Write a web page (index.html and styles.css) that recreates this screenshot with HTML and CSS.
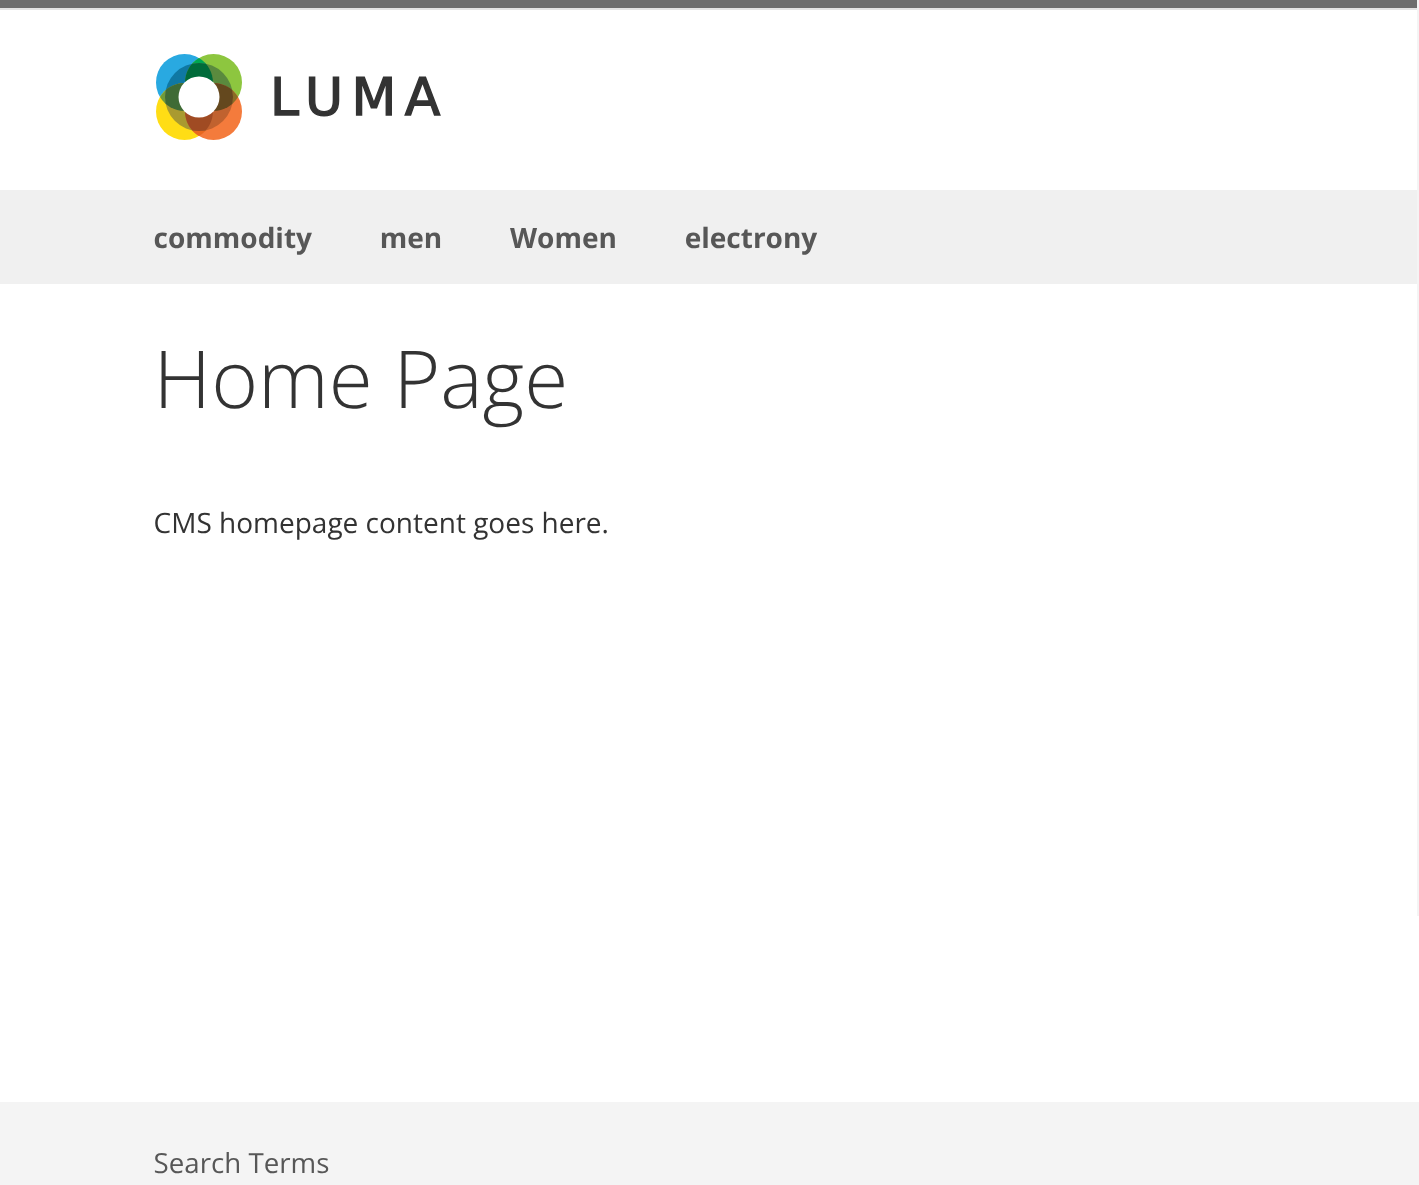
FILE: index.html
```html
<!DOCTYPE html>
<html lang="en">
<head>
    <meta charset="UTF-8">
    <title>Home Page</title>
    <link rel="stylesheet" href="styles.css">
</head>
<body>
    <div class="panel"></div>

    <header class="header">
        <a class="logo" href="#">
            <svg class="logo-mark" width="86" height="86" viewBox="0 0 86 86">
                <defs>
                    <clipPath id="inner">
                        <circle cx="43" cy="43" r="34"/>
                    </clipPath>
                    <path id="lens-top" d="M43 4A28.5 28.5 0 0 1 43 53A28.5 28.5 0 0 1 43 4Z"/>
                    <path id="lens-bottom" d="M43 33A28.5 28.5 0 0 1 43 82A28.5 28.5 0 0 1 43 33Z"/>
                    <path id="lens-left" d="M4 43A28.5 28.5 0 0 1 53 43A28.5 28.5 0 0 1 4 43Z"/>
                    <path id="lens-right" d="M33 43A28.5 28.5 0 0 1 82 43A28.5 28.5 0 0 1 33 43Z"/>
                </defs>
                <g class="petals">
                    <circle class="petal" cx="28.5" cy="28.5" r="28.5" fill="#29a9e1"/>
                    <circle cx="57.5" cy="28.5" r="28.5" fill="#8dc63f"/>
                    <circle cx="28.5" cy="57.5" r="28.5" fill="#ffdd15"/>
                    <circle cx="57.5" cy="57.5" r="28.5" fill="#f47b3c"/>
                    <use href="#lens-top" fill="#00a651"/>
                    <use href="#lens-left" fill="#6f9a3a"/>
                    <use href="#lens-right" fill="#8a6d25"/>
                    <use href="#lens-bottom" fill="#e8681f"/>
                </g>
                <g clip-path="url(#inner)">
                    <circle cx="28.5" cy="28.5" r="28.5" fill="#0f78a3"/>
                    <circle cx="57.5" cy="28.5" r="28.5" fill="#5a8a3e"/>
                    <circle cx="28.5" cy="57.5" r="28.5" fill="#a99a30"/>
                    <circle cx="57.5" cy="57.5" r="28.5" fill="#c0622f"/>
                    <use href="#lens-top" fill="#006b3a"/>
                    <use href="#lens-left" fill="#3f6b35"/>
                    <use href="#lens-right" fill="#64481e"/>
                    <use href="#lens-bottom" fill="#a04b23"/>
                </g>
                <circle cx="43" cy="43" r="20.5" fill="#fff"/>
            </svg>
            <span class="logo-text">LUMA</span>
        </a>
    </header>

    <nav class="nav">
        <a href="#">commodity</a>
        <a href="#">men</a>
        <a href="#">Women</a>
        <a href="#">electrony</a>
    </nav>

    <main class="main">
        <h1 class="title">Home Page</h1>
        <p class="content">CMS homepage content goes here.</p>
    </main>

    <footer class="footer">
        <a href="#">Search Terms</a>
    </footer>

    <div class="scrollbar"></div>
</body>
</html>
```

FILE: styles.css
```css
html, body {
    height: 1185px;
    overflow: hidden;
}

body {
    margin: 0;
    position: relative;
    background: #fff;
    color: #333;
    font-family: "Open Sans", sans-serif;
    font-size: 28px;
    line-height: 1.4;
    text-rendering: geometricPrecision;
}

a {
    color: inherit;
    text-decoration: none;
}

.panel {
    height: 8px;
    background: #6e6e6e;
    border-bottom: 2px solid #e4e4e4;
}

.header {
    height: 180px;
    padding-left: 156px;
    display: flex;
    align-items: center;
}

.logo {
    display: flex;
    align-items: center;
    gap: 28px;
    margin-top: -6px;
}

.petals {
    isolation: isolate;
}

.petal {
    mix-blend-mode: multiply;
}

.logo-text {
    padding-top: 2px;
    font-family: "DejaVu Sans", sans-serif;
    font-size: 52px;
    font-weight: 400;
    letter-spacing: 8.5px;
    line-height: 1;
    -webkit-text-stroke: 1.4px #333;
}

.nav {
    height: 91px;
    padding: 3px 0 0 153.6px;
    display: flex;
    align-items: center;
    gap: 67.8px;
    background: #f0f0f0;
    color: #575757;
    font-weight: 700;
}

.main {
    height: 818px;
    padding-left: 153.6px;
}

.title {
    margin: 0;
    padding-top: 38px;
    font-size: 80px;
    font-weight: 300;
    line-height: 112px;
}

.content {
    margin: 0;
    padding-top: 70px;
}

.footer {
    padding: 42px 0 0 153.6px;
    height: 83px;
    box-sizing: border-box;
    background: #f4f4f4;
    color: #575757;
    font-size: 27.7px;
}

.scrollbar {
    position: absolute;
    top: 0;
    right: 0;
    width: 2px;
    height: 916px;
    background: #f4f4f4;
}
```
